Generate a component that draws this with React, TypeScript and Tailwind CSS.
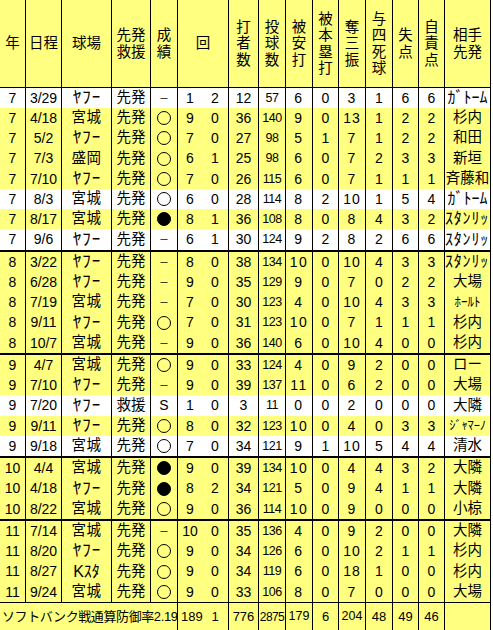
import React from 'react';

type Row = {
    y: string;
    date: string;
    park: string;
    role: string;
    res: string;
    inn: string;
    frac: string;
    bf: string;
    np: string;
    h: string;
    hr: string;
    so: string;
    bb: string;
    r: string;
    er: string;
    opp: string;
    white?: boolean;
};

const rows: Row[] = [
    { y: '7', date: '3/29', park: 'ﾔﾌｰ', role: '先発', res: '－', inn: '1', frac: '2', bf: '12', np: '57', h: '6', hr: '0', so: '3', bb: '1', r: '6', er: '6', opp: 'ｶﾞﾄｰﾑ', white: true },
    { y: '7', date: '4/18', park: '宮城', role: '先発', res: '○', inn: '9', frac: '0', bf: '36', np: '140', h: '9', hr: '0', so: '13', bb: '1', r: '2', er: '2', opp: '杉内' },
    { y: '7', date: '5/2', park: 'ﾔﾌｰ', role: '先発', res: '○', inn: '7', frac: '0', bf: '27', np: '98', h: '5', hr: '1', so: '7', bb: '1', r: '2', er: '2', opp: '和田' },
    { y: '7', date: '7/3', park: '盛岡', role: '先発', res: '○', inn: '6', frac: '1', bf: '25', np: '98', h: '6', hr: '0', so: '7', bb: '2', r: '3', er: '3', opp: '新垣' },
    { y: '7', date: '7/10', park: 'ﾔﾌｰ', role: '先発', res: '○', inn: '7', frac: '0', bf: '26', np: '115', h: '6', hr: '0', so: '7', bb: '1', r: '1', er: '1', opp: '斉藤和' },
    { y: '7', date: '8/3', park: '宮城', role: '先発', res: '○', inn: '6', frac: '0', bf: '28', np: '114', h: '8', hr: '2', so: '10', bb: '1', r: '5', er: '4', opp: 'ｶﾞﾄｰﾑ', white: true },
    { y: '7', date: '8/17', park: '宮城', role: '先発', res: '●', inn: '8', frac: '1', bf: '36', np: '108', h: '8', hr: '0', so: '8', bb: '4', r: '3', er: '2', opp: 'ｽﾀﾝﾘｯ' },
    { y: '7', date: '9/6', park: 'ﾔﾌｰ', role: '先発', res: '－', inn: '6', frac: '1', bf: '30', np: '124', h: '9', hr: '2', so: '8', bb: '2', r: '6', er: '6', opp: 'ｽﾀﾝﾘｯ', white: true },
    { y: '8', date: '3/22', park: 'ﾔﾌｰ', role: '先発', res: '－', inn: '8', frac: '0', bf: '38', np: '134', h: '10', hr: '0', so: '10', bb: '4', r: '3', er: '3', opp: 'ｽﾀﾝﾘｯ' },
    { y: '8', date: '6/28', park: 'ﾔﾌｰ', role: '先発', res: '－', inn: '9', frac: '0', bf: '35', np: '129', h: '9', hr: '0', so: '7', bb: '0', r: '2', er: '2', opp: '大場' },
    { y: '8', date: '7/19', park: '宮城', role: '先発', res: '－', inn: '7', frac: '0', bf: '30', np: '123', h: '4', hr: '0', so: '10', bb: '4', r: '3', er: '3', opp: 'ﾎｰﾙﾄ' },
    { y: '8', date: '9/11', park: 'ﾔﾌｰ', role: '先発', res: '○', inn: '7', frac: '0', bf: '31', np: '123', h: '10', hr: '0', so: '7', bb: '1', r: '1', er: '1', opp: '杉内' },
    { y: '8', date: '10/7', park: '宮城', role: '先発', res: '－', inn: '9', frac: '0', bf: '36', np: '140', h: '6', hr: '0', so: '10', bb: '4', r: '0', er: '0', opp: '杉内' },
    { y: '9', date: '4/7', park: '宮城', role: '先発', res: '○', inn: '9', frac: '0', bf: '33', np: '124', h: '4', hr: '0', so: '9', bb: '2', r: '0', er: '0', opp: 'ロー' },
    { y: '9', date: '7/10', park: 'ﾔﾌｰ', role: '先発', res: '－', inn: '9', frac: '0', bf: '39', np: '137', h: '11', hr: '0', so: '6', bb: '2', r: '0', er: '0', opp: '大場' },
    { y: '9', date: '7/20', park: 'ﾔﾌｰ', role: '救援', res: 'S', inn: '1', frac: '0', bf: '3', np: '11', h: '0', hr: '0', so: '2', bb: '0', r: '0', er: '0', opp: '大隣', white: true },
    { y: '9', date: '9/11', park: 'ﾔﾌｰ', role: '先発', res: '○', inn: '8', frac: '0', bf: '32', np: '123', h: '10', hr: '0', so: '4', bb: '0', r: '3', er: '3', opp: 'ｼﾞｬﾏｰﾉ' },
    { y: '9', date: '9/18', park: '宮城', role: '先発', res: '○', inn: '7', frac: '0', bf: '34', np: '121', h: '9', hr: '1', so: '10', bb: '5', r: '4', er: '4', opp: '清水', white: true },
    { y: '10', date: '4/4', park: '宮城', role: '先発', res: '●', inn: '9', frac: '0', bf: '39', np: '134', h: '10', hr: '0', so: '4', bb: '4', r: '3', er: '2', opp: '大隣' },
    { y: '10', date: '4/18', park: 'ﾔﾌｰ', role: '先発', res: '●', inn: '8', frac: '2', bf: '34', np: '121', h: '5', hr: '0', so: '9', bb: '4', r: '1', er: '1', opp: '大隣' },
    { y: '10', date: '8/22', park: '宮城', role: '先発', res: '○', inn: '9', frac: '0', bf: '36', np: '114', h: '10', hr: '0', so: '9', bb: '0', r: '0', er: '0', opp: '小椋' },
    { y: '11', date: '7/14', park: '宮城', role: '先発', res: '－', inn: '10', frac: '0', bf: '35', np: '136', h: '4', hr: '0', so: '9', bb: '2', r: '0', er: '0', opp: '大隣' },
    { y: '11', date: '8/20', park: 'ﾔﾌｰ', role: '先発', res: '○', inn: '9', frac: '0', bf: '34', np: '126', h: '6', hr: '0', so: '10', bb: '2', r: '1', er: '1', opp: '杉内' },
    { y: '11', date: '8/27', park: 'Kｽﾀ', role: '先発', res: '○', inn: '9', frac: '0', bf: '34', np: '119', h: '6', hr: '0', so: '18', bb: '1', r: '0', er: '0', opp: '杉内' },
    { y: '11', date: '9/24', park: '宮城', role: '先発', res: '○', inn: '9', frac: '0', bf: '33', np: '106', h: '8', hr: '0', so: '7', bb: '0', r: '0', er: '0', opp: '大場' },
];

const headers: { w: string; label: string[] }[] = [
    { w: 'w-[25px]', label: ['年'] },
    { w: 'w-[36px]', label: ['日程'] },
    { w: 'w-[50px]', label: ['球場'] },
    { w: 'w-[39px]', label: ['先発', '救援'] },
    { w: 'w-[27px]', label: ['成', '績'] },
    { w: 'w-[51px]', label: ['回'] },
    { w: 'w-[30px]', label: ['打', '者', '数'] },
    { w: 'w-[27px]', label: ['投', '球', '数'] },
    { w: 'w-[27px]', label: ['被', '安', '打'] },
    { w: 'w-[26px]', label: ['被', '本', '塁', '打'] },
    { w: 'w-[27px]', label: ['奪', '三', '振'] },
    { w: 'w-[27px]', label: ['与', '四', '死', '球'] },
    { w: 'w-[26px]', label: ['失', '点'] },
    { w: 'w-[26px]', label: ['自', '責', '点'] },
    { w: 'w-[46px]', label: ['相手', '先発'] },
];

const cell = 'flex shrink-0 items-center justify-center border-l border-black';

// half-width katakana look larger and spaced out in the original sheet
function oppClass(opp: string) {
    if (opp === 'ｽﾀﾝﾘｯ') return 'text-[16px] tracking-[0.8px] justify-start';
    if (opp === 'ｶﾞﾄｰﾑ') return 'text-[16px]';
    if (opp === 'ﾎｰﾙﾄ') return 'text-[13px]';
    if (opp === 'ｼﾞｬﾏｰﾉ') return 'text-[12.5px] tracking-[-0.2px]';
    return 'text-[14.5px]';
}

function parkClass(park: string) {
    if (park === 'ﾔﾌｰ') return 'text-[17px] tracking-[1px] pl-[1px]';
    if (park === 'Kｽﾀ') return 'text-[16px]';
    return 'text-[14.5px] tracking-[0.5px]';
}

function heightClass(i: number, sep: boolean) {
    const tall = i % 4 === 3;
    if (sep) return tall ? 'h-[23px]' : 'h-[22px]';
    return tall ? 'h-[21px]' : 'h-[20px]';
}

// 勝ち(○) / 負け(●) are drawn as circles so they sit centred like the sheet
function Result({ res }: { res: string }) {
    if (res === '－') return <span className="text-[10px]">－</span>;
    if (res === 'S') return <span>S</span>;
    return (
        <span
            title={res}
            className={`block h-[14px] w-[14px] rounded-full border border-black ${res === '●' ? 'bg-black' : ''}`}
        />
    );
}

export default function App() {
    return (
        <div className="w-[493px] h-[630px] overflow-hidden bg-white text-black font-['Liberation_Sans','Noto_Sans_CJK_JP',sans-serif] text-[14px]">
            <div className="w-[491px] border-r border-black">
                {/* header */}
                <div className="flex h-[88px] border-b border-black bg-[#ffff80] text-[14.5px]">
                    {headers.map((h, i) => (
                        <div
                            key={i}
                            className={`${cell} ${h.w} ${i === 0 ? 'border-l-0' : ''} flex-col leading-[16.5px]`}
                        >
                            {h.label.map((l, j) => (
                                <span key={j}>{l}</span>
                            ))}
                        </div>
                    ))}
                </div>

                {rows.map((r, i) => {
                    const sep = i > 0 && rows[i - 1].y !== r.y;
                    return (
                        <div
                            key={i}
                            className={`flex ${sep ? 'border-t-2 border-black' : ''} ${r.white ? 'bg-white' : 'bg-[#ffff80]'} ${heightClass(i, sep)}`}
                        >
                            <div className={`${cell} w-[25px] border-l-0`}>{r.y}</div>
                            <div className={`${cell} w-[36px]`}>{r.date}</div>
                            <div className={`${cell} w-[50px] ${parkClass(r.park)}`}>{r.park}</div>
                            <div className={`${cell} w-[39px] text-[14.5px]`}>{r.role}</div>
                            <div className={`${cell} w-[27px]`}>
                                <Result res={r.res} />
                            </div>
                            <div className={`${cell} w-[25px]`}>{r.inn}</div>
                            <div className="flex w-[26px] shrink-0 items-center justify-center">{r.frac}</div>
                            <div className={`${cell} w-[30px]`}>{r.bf}</div>
                            <div className={`${cell} w-[27px] text-[12.5px] tracking-[-0.5px]`}>{r.np}</div>
                            <div className={`${cell} w-[27px] tracking-[1.5px]`}>{r.h}</div>
                            <div className={`${cell} w-[26px]`}>{r.hr}</div>
                            <div className={`${cell} w-[27px] tracking-[1px]`}>{r.so}</div>
                            <div className={`${cell} w-[27px]`}>{r.bb}</div>
                            <div className={`${cell} w-[26px]`}>{r.r}</div>
                            <div className={`${cell} w-[26px]`}>{r.er}</div>
                            <div className={`${cell} w-[46px] overflow-hidden whitespace-nowrap ${oppClass(r.opp)}`}>
                                {r.opp}
                            </div>
                        </div>
                    );
                })}

                {/* total */}
                <div className="flex h-[28px] border-t border-black bg-[#ffff80] text-[13px]">
                    <div className="flex w-[177px] shrink-0 items-center whitespace-nowrap pl-[2px] tracking-[-0.4px]">
                        ソフトバンク戦通算防御率2.19
                    </div>
                    <div className={`${cell} w-[25px] justify-start pl-[3px]`}>189</div>
                    <div className="flex w-[26px] shrink-0 items-center justify-center">1</div>
                    <div className={`${cell} w-[30px]`}>776</div>
                    <div className={`${cell} w-[27px] text-[12px] tracking-[-0.6px]`}>2875</div>
                    <div className={`${cell} w-[27px] text-[12.5px]`}>179</div>
                    <div className={`${cell} w-[26px]`}>6</div>
                    <div className={`${cell} w-[27px] text-[12.5px]`}>204</div>
                    <div className={`${cell} w-[27px]`}>48</div>
                    <div className={`${cell} w-[26px]`}>49</div>
                    <div className={`${cell} w-[26px]`}>46</div>
                    <div className={`${cell} w-[46px]`}></div>
                </div>
            </div>
        </div>
    );
}
